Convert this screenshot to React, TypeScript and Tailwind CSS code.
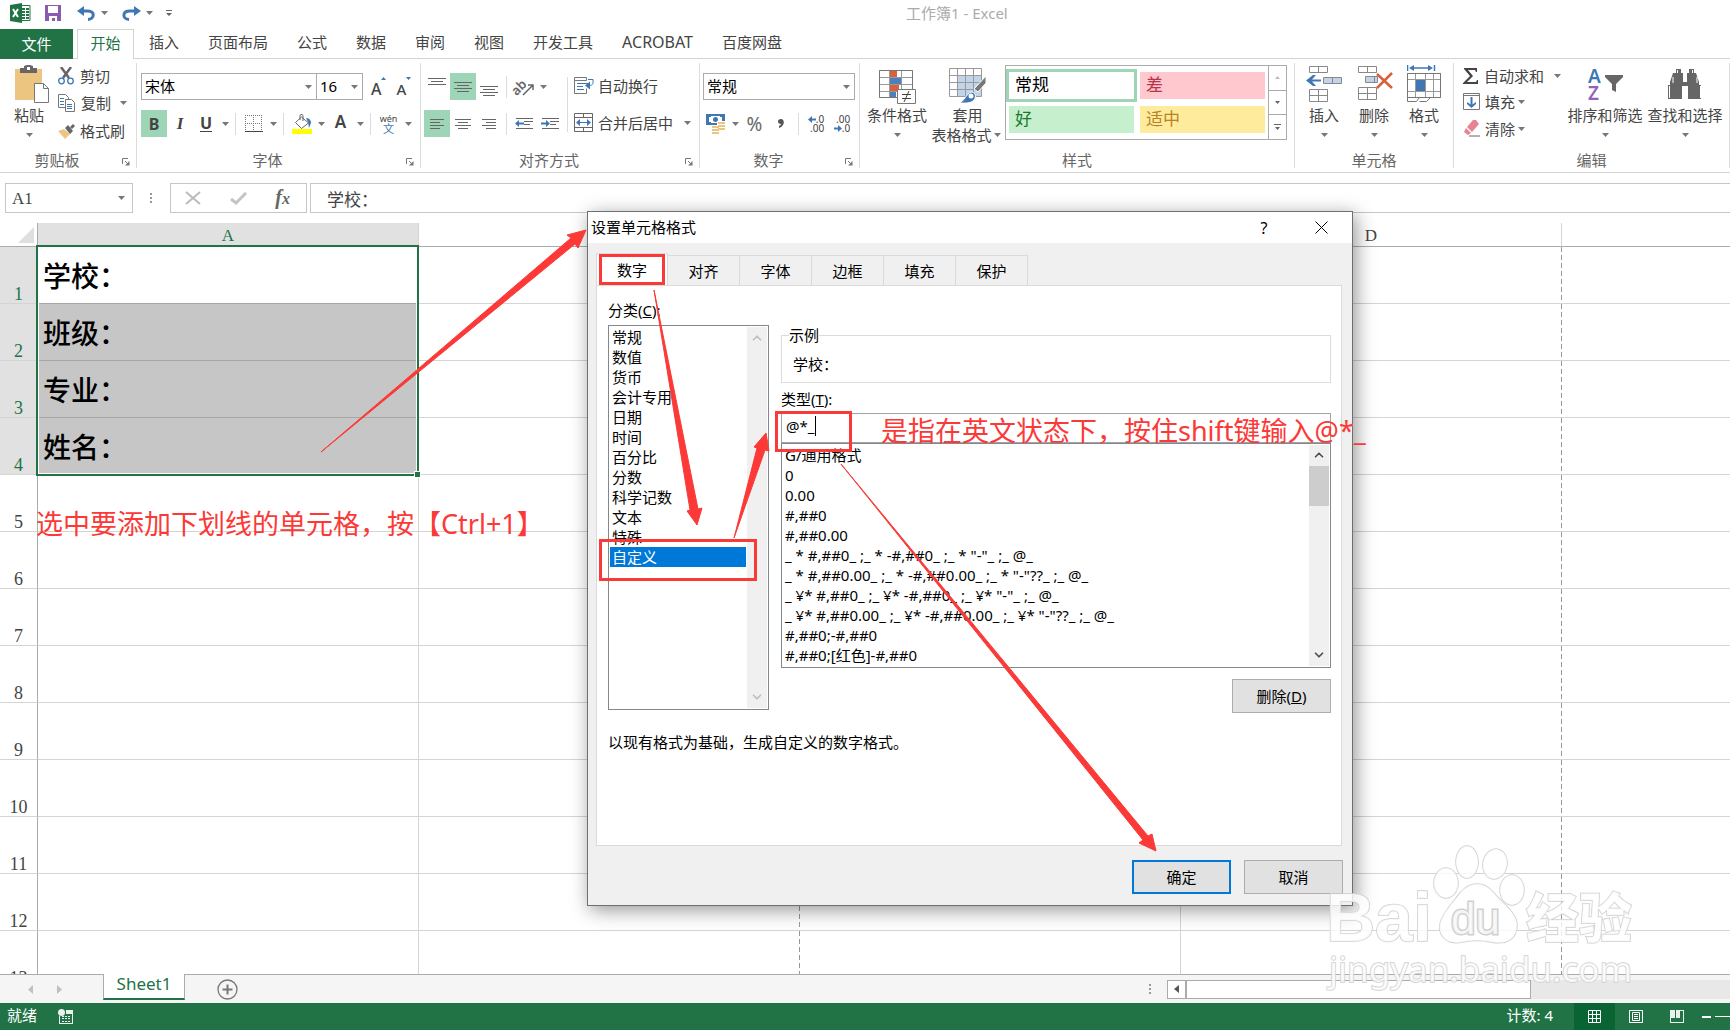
import React from 'react';
import { clsx } from 'clsx';
import { ChevronDown, ChevronUp } from 'lucide-react';

const ribbonTabs = ['插入', '页面布局', '公式', '数据', '审阅', '视图', '开发工具', 'ACROBAT', '百度网盘'];
const columns = ['A', 'B', 'C', 'D', 'E'];
const cells = ['学校：', '班级：', '专业：', '姓名：'];
const rows = Array.from({ length: 14 }, (_, i) => i + 1);
const dialogTabs = ['数字', '对齐', '字体', '边框', '填充', '保护'];
const categories = [
  '常规', '数值', '货币', '会计专用', '日期', '时间', '百分比', '分数', '科学记数', '文本', '特殊', '自定义',
];
const formats = [
  'G/通用格式',
  '0',
  '0.00',
  '#,##0',
  '#,##0.00',
  '_ * #,##0_ ;_ * -#,##0_ ;_ * "-"_ ;_ @_ ',
  '_ * #,##0.00_ ;_ * -#,##0.00_ ;_ * "-"??_ ;_ @_ ',
  '_ ¥* #,##0_ ;_ ¥* -#,##0_ ;_ ¥* "-"_ ;_ @_ ',
  '_ ¥* #,##0.00_ ;_ ¥* -#,##0.00_ ;_ ¥* "-"??_ ;_ @_ ',
  '#,##0;-#,##0',
  '#,##0;[红色]-#,##0',
];

const Caret = ({ className }: { className?: string }) => (
  <span className={clsx('flex w-3 shrink-0 justify-center', className)}>
    <svg width="7" height="4" viewBox="0 0 7 4" fill="#777">
      <path d="M0 0h7L3.5 4z" />
    </svg>
  </span>
);

const Sep = () => <span className="mx-1 h-[22px] w-px shrink-0 bg-[#dcdcdc]" />;

type ToolProps = { label: string; active?: boolean; wide?: boolean; children: React.ReactNode };

const Tool = ({ label, active, wide, children }: ToolProps) => (
  <button
    type="button"
    aria-label={label}
    className={clsx(
      'flex h-[27px] shrink-0 items-center justify-center',
      wide ? 'w-[27px]' : 'w-[26px]',
      active && 'bg-[#9fd5b7]'
    )}
  >
    {children}
  </button>
);

type GroupProps = { title: string; className: string; launcher?: boolean; children: React.ReactNode };

const Group = ({ title, className, launcher, children }: GroupProps) => (
  <section className={clsx('flex h-[105px] flex-col border-r border-[#dcdcdc]', className)}>
    <div className="flex min-h-0 flex-1">{children}</div>
    <div className="flex h-4 items-center text-[#666]">
      <span className="flex-1 text-center">{title}</span>
      {launcher && (
        <button type="button" aria-label={`${title}设置`} className="mt-1 mr-[6px] ml-2">
          <svg width="8" height="8" viewBox="0 0 8 8" fill="none" stroke="#777">
            <path d="M.5 6V.5H6M3 3l3 3" />
            <path d="M7.5 3v4.5H3z" fill="#777" stroke="none" />
          </svg>
        </button>
      )}
    </div>
  </section>
);

type BigButtonProps = { label: string; className: string; icon: React.ReactNode };

const BigButton = ({ label, className, icon }: BigButtonProps) => (
  <button type="button" className={clsx('flex shrink-0 flex-col items-center whitespace-nowrap', className)}>
    <span className="flex h-[42px] items-center">{icon}</span>
    <span className="leading-5">{label}</span>
    <Caret className="mt-2" />
  </button>
);

type ComboProps = { label: string; value: string; className: string };

const Combo = ({ label, value, className }: ComboProps) => (
  <div className={clsx('relative h-[27px] border border-[#ababab] bg-white text-black', className)}>
    <select aria-label={label} className="h-full w-full appearance-none bg-transparent pb-[2px] pl-[3px] outline-none">
      <option>{value}</option>
    </select>
    <Caret className="pointer-events-none absolute top-[11px] right-[2px]" />
  </div>
);

/* Horizontal strokes used by the alignment buttons: [x, width] per line */
const Lines = ({ lines, y = 5 }: { lines: number[][]; y?: number }) => (
  <svg width="18" height="20" viewBox="0 0 18 20" fill="#666">
    {lines.map(([x, w], i) => (
      <rect key={i} x={x} y={y + i * 3} width={w} height="1" />
    ))}
  </svg>
);

const IndentIcon = ({ out }: { out?: boolean }) => (
  <svg width="18" height="12" viewBox="0 0 18 12" fill="#666">
    <path d="M1 0h17v1H1zM9 3h9v1H9zM9 6h6v1H9zM1 10h17v1H1z" />
    <path d={out ? 'M0 5.500L4 2v2.500h5v2H4V9z' : 'M9 5.500L5 2v2.500H0v2h5V9z'} fill="#3f77b5" />
  </svg>
);

const QuickAccess = () => (
  <header className="flex h-[29px] items-center pb-[3px] pl-[10px]">
    <svg width="21" height="20" viewBox="0 0 21 20">
      <path d="M11 2.500h9v15h-9" fill="#fff" stroke="#217346" />
      <path d="M12 5h3v2h-3zM16 5h3v2h-3zM12 8h3v2h-3zM16 8h3v2h-3zM12 11h3v2h-3zM16 11h3v2h-3zM12 14h3v2h-3zM16 14h3v2h-3z" fill="#217346" />
      <path d="M0 2l12-2v20L0 18z" fill="#217346" />
      <path d="M3 6l5 8M8 6l-5 8" stroke="#fff" strokeWidth="2" />
    </svg>
    <button type="button" aria-label="保存" className="ml-[14px]">
      <svg width="16" height="16" viewBox="0 0 16 16">
        <path d="M0 0h16v16H0z" fill="#8b5bb0" />
        <path d="M3 1h10v7H3zM4 11h8v5h-2v-3H7v3H4z" fill="#fff" />
      </svg>
    </button>
    <button type="button" aria-label="撤消" className="ml-4">
      <svg width="19" height="15" viewBox="0 0 19 15" fill="none" stroke="#3f77b5" strokeWidth="3">
        <path d="M4 5h7c7 0 7 8 0 8.500" />
        <path d="M0 5L7 0v10z" fill="#3f77b5" stroke="none" />
      </svg>
    </button>
    <Caret className="ml-[2px]" />
    <button type="button" aria-label="恢复" className="ml-3">
      <svg width="19" height="15" viewBox="0 0 19 15" fill="none" stroke="#3f77b5" strokeWidth="3">
        <path d="M15 5H8C0 5 0 13 7 13.500" />
        <path d="M19 5l-7-5v10z" fill="#3f77b5" stroke="none" />
      </svg>
    </button>
    <Caret className="ml-[2px]" />
    <button type="button" aria-label="自定义快速访问工具栏" className="ml-[11px]">
      <svg width="6" height="6" viewBox="0 0 6 6" fill="#666">
        <path d="M0 0h6v1H0zM0 3h6L3 6z" />
      </svg>
    </button>
    <h1 className="ml-[734px] whitespace-nowrap text-[#ababab]">工作簿1 - Excel</h1>
  </header>
);

const RibbonTabs = () => (
  <nav className="flex h-[30px] whitespace-nowrap">
    <button type="button" className="w-[73px] bg-[#217346] text-white">文件</button>
    <span className="w-1 border-b border-[#d4d4d4]" />
    <button type="button" className="w-[57px] border border-b-0 border-[#d4d4d4] pb-1 text-[#217346]">开始</button>
    <div className="flex flex-1 gap-[29px] border-b border-[#d4d4d4] pl-[15px]">
      {ribbonTabs.map((tab) => (
        <button key={tab} type="button" className={clsx('pb-1', tab === 'ACROBAT' && 'text-base')}>{tab}</button>
      ))}
    </div>
  </nav>
);

const ClipboardGroup = () => (
  <Group title="剪贴板" className="w-[137px]" launcher>
    <BigButton
      label="粘贴"
      className="w-[58px]"
      icon={
        <svg width="34" height="38" viewBox="0 0 34 38" className="ml-[6px]">
          <path d="M0 4h27v31H0z" fill="#ecc681" />
          <path d="M5 3h4V1l3-1h3l3 1v2h4v5H5z" fill="#666" />
          <path d="M12 2h3v3h-3z" fill="#fff" />
          <path d="M19.500 18.500h9l5 5v14h-14z" fill="#fff" stroke="#777" />
          <path d="M28.500 18.500v5h5" fill="none" stroke="#777" />
        </svg>
      }
    />
    <div className="flex flex-col">
      <button type="button" className="flex h-[26px] items-center gap-[6px]">
        <svg width="16" height="18" viewBox="0 0 16 18" fill="none">
          <path d="M3 0l8 11M13 0L5 11" stroke="#666" strokeWidth="2.500" />
          <circle cx="3.500" cy="14" r="2.800" stroke="#3f77b5" strokeWidth="1.300" />
          <circle cx="12.500" cy="14" r="2.800" stroke="#3f77b5" strokeWidth="1.300" />
        </svg>
        剪切
      </button>
      <button type="button" className="flex h-7 items-center gap-[6px]">
        <svg width="17" height="18" viewBox="0 0 17 18" fill="#fff" stroke="#777">
          <path d="M.5.5h7l3 3v10H.5z" />
          <path d="M2 4.500h4M2 7.500h4M2 10.500h4" stroke="#3f77b5" />
          <path d="M7.500 5.500h6l3 3v9h-9z" />
          <path d="M9 10.500h5M9 12.500h5M9 14.500h5" stroke="#3f77b5" />
        </svg>
        复制
        <Caret />
      </button>
      <button type="button" className="flex h-7 items-center gap-[5px]">
        <svg width="17" height="15" viewBox="0 0 17 15">
          <path d="M0 7l6-2 6 5-5 5z" fill="#ecc681" />
          <path d="M7 4l3-3 5 6-3 3zM12 3l3-3 2 2-3 3z" fill="#666" />
        </svg>
        格式刷
      </button>
    </div>
  </Group>
);

const FontGroup = () => (
  <Group title="字体" className="w-[284px]" launcher>
    <div className="flex flex-col gap-[10px] pt-[10px] pl-1">
      <div className="flex items-center">
        <Combo label="字体" value="宋体" className="w-[176px]" />
        <Combo label="字号" value="16" className="ml-[-1px] w-[47px]" />
        <button type="button" aria-label="增大字号" className="ml-2 flex items-start">
          <span className="pt-1 text-base leading-4 font-medium">A</span>
          <svg width="5" height="3" viewBox="0 0 5 3" fill="#3f77b5"><path d="M0 3h5L2.500 0z" /></svg>
        </button>
        <button type="button" aria-label="减小字号" className="ml-[10px] flex items-start">
          <span className="pt-1 text-[15px] leading-4 font-medium">A</span>
          <svg width="5" height="3" viewBox="0 0 5 3" fill="#3f77b5"><path d="M0 0h5L2.500 3z" /></svg>
        </button>
      </div>
      <div className="flex items-center">
        <Tool label="加粗" active><b className="text-base">B</b></Tool>
        <Tool label="倾斜"><i className="font-['Liberation_Serif',serif] text-[17px] font-bold">I</i></Tool>
        <Tool label="下划线"><span className="border-b border-[#444] text-base leading-4 font-bold">U</span></Tool>
        <Caret />
        <Sep />
        <Tool label="边框" wide>
          <svg width="18" height="18" viewBox="0 0 18 18" fill="none" stroke="#777">
            <path d="M.5 0v17M8.500 0v17M16.500 0v17M0 .5h17M0 8.500h17" strokeDasharray="1 1" />
            <path d="M0 16.500h18" stroke="#444" />
          </svg>
        </Tool>
        <Caret />
        <Sep />
        <Tool label="填充颜色" wide>
          <svg width="20" height="20" viewBox="0 0 20 20">
            <path d="M0 15h20v5H0z" fill="#ff0" />
            <path d="M9.500 3l7 6-7 5.500-6-6zM8 6V1.500C8 0 11 0 11 2v5" fill="#fff" stroke="#666" />
            <path d="M14 4c4 0 5 3 5 5l-2 5-1-6z" fill="#3f77b5" />
          </svg>
        </Tool>
        <Caret />
        <Tool label="字体颜色" wide><span className="mb-1 text-[17px] leading-5 font-semibold">A</span></Tool>
        <Caret />
        <Sep />
        <Tool label="显示拼音字段" wide>
          <span className="flex flex-col items-center text-[9px] leading-[9px]">
            wén
            <span className="text-[11px] leading-[11px] text-[#3f77b5]">文</span>
          </span>
        </Tool>
        <Caret />
      </div>
    </div>
  </Group>
);

const AlignGroup = () => (
  <Group title="对齐方式" className="w-[279px]" launcher>
    <div className="flex flex-col gap-[10px] pt-[10px] pl-[3px]">
      <div className="flex items-center">
        <Tool label="顶端对齐"><Lines y={1} lines={[[0, 18], [3, 12], [0, 18]]} /></Tool>
        <Tool label="垂直居中" active><Lines y={5} lines={[[0, 18], [3, 12], [0, 18], [3, 12]]} /></Tool>
        <Tool label="底端对齐"><Lines y={9} lines={[[0, 18], [3, 12], [0, 18], [3, 12]]} /></Tool>
        <Sep />
        <Tool label="方向">
          <svg width="19" height="18" viewBox="0 0 19 18" fill="none" stroke="#666" strokeWidth="1.500" className="overflow-visible">
            <text x="-4" y="13" transform="rotate(-45 5 9)" fill="#666" stroke="none" fontSize="13" fontWeight="600">ab</text>
            <path d="M8 17L18 7M13 7h5v5" />
          </svg>
        </Tool>
        <Caret />
      </div>
      <div className="flex items-center">
        <Tool label="左对齐" active><Lines lines={[[2, 14], [2, 10], [2, 14], [2, 10]]} /></Tool>
        <Tool label="居中"><Lines lines={[[1, 16], [4, 10], [1, 16], [4, 10]]} /></Tool>
        <Tool label="右对齐"><Lines lines={[[2, 14], [6, 10], [2, 14], [6, 10]]} /></Tool>
        <Sep />
        <Tool label="减少缩进量"><IndentIcon out /></Tool>
        <Tool label="增加缩进量"><IndentIcon /></Tool>
      </div>
    </div>
    <span className="mx-1 mt-[14px] h-[55px] w-px bg-[#dcdcdc]" />
    <div className="flex flex-col gap-[10px] pt-[9px] pl-[2px]">
      <button type="button" className="flex h-[27px] items-center gap-1">
        <svg width="20" height="20" viewBox="0 0 20 20" fill="none" stroke="#777">
          <path d="M.5 4.500v-3h12v3zM.5 4.500v13h12v-5" />
          <path d="M3 7.500h11M3 10.500h6M3 13.500h7" stroke="#3f77b5" />
          <path d="M14 3.500h5v3c0 3-3 3-5 3" stroke="#3f77b5" />
          <path d="M11 9.500l5-4v8z" fill="#3f77b5" stroke="none" />
        </svg>
        自动换行
      </button>
      <button type="button" className="flex h-[27px] items-center gap-1">
        <svg width="20" height="20" viewBox="0 0 20 20" fill="none" stroke="#666">
          <path d="M.5.5h18v18H.5zM.5 4.500h18M.5 14.500h18M9.500.5v4M9.500 14.500v4" />
          <path d="M4 9.500h11" stroke="#3f77b5" />
          <path d="M2 9.500L6 6v7zM17 9.500L13 6v7z" fill="#3f77b5" stroke="none" />
        </svg>
        合并后居中
        <Caret className="ml-1" />
      </button>
    </div>
  </Group>
);

const NumberGroup = () => (
  <Group title="数字" className="w-[160px]" launcher>
    <div className="flex flex-col gap-[10px] pt-[10px] pl-[3px]">
      <Combo label="数字格式" value="常规" className="w-[152px]" />
      <div className="flex items-center">
        <Tool label="会计数字格式">
          <svg width="20" height="20" viewBox="0 0 20 20">
            <path d="M0 0h19v11H0z" fill="#3f77b5" />
            <path d="M3 3h2V2h9v1h2v5h-2v1H5V8H3z" fill="#fff" />
            <circle cx="9.500" cy="5.500" r="2.500" fill="#3f77b5" />
            <path d="M11 7h8v10h-5v3H6v-9h5z" fill="#fff" />
            <path d="M12 8h7v2h-7zM12 11h7v2h-7zM12 14h7v2h-7zM6 12h7v2H6zM6 15h7v2H6zM6 18h7v2H6z" fill="#ecc681" />
          </svg>
        </Tool>
        <Caret />
        <Tool label="百分比样式" wide><span className="text-[19px] text-[#666]">%</span></Tool>
        <Tool label="千位分隔样式">
          <svg width="6" height="9" viewBox="0 0 6 9" fill="#555"><path d="M3 0c4 0 4 7-2 9V7c2-1 2-2 2-2C-1 5-1 0 3 0z" /></svg>
        </Tool>
        <Sep />
        <Tool label="增加小数位数">
          <span className="flex flex-col items-end text-[10px] leading-[9px]">
            <span className="flex items-center">
              <svg width="8" height="7" viewBox="0 0 8 7" fill="#3f77b5"><path d="M0 3.500L4 0v2.500h4v2H4V7z" /></svg>.0
            </span>
            .00
          </span>
        </Tool>
        <Tool label="减少小数位数">
          <span className="flex flex-col items-end text-[10px] leading-[9px]">
            .00
            <span className="flex items-center">
              <svg width="8" height="7" viewBox="0 0 8 7" fill="#3f77b5"><path d="M8 3.500L4 0v2.500H0v2h4V7z" /></svg>.0
            </span>
          </span>
        </Tool>
      </div>
    </div>
  </Group>
);

const StylesGroup = () => (
  <Group title="样式" className="w-[435px]">
    <BigButton
      label="条件格式"
      className="ml-1 w-[66px]"
      icon={
        <svg width="37" height="36" viewBox="0 0 37 36" fill="none" stroke="#999" className="mt-1">
          <path d="M.5 2.500h33v27H.5zM10.500 2v27M22.500 2v27M0 9.500h33M0 16.500h33M0 23.500h33" />
          <path d="M.5 2.500h33v27H.5z" stroke="#777" />
          <path d="M11 3h7v6h-7zM11 17h9v6h-9z" fill="#d9603b" stroke="none" />
          <path d="M11 10h11v6H11zM11 24h6v5h-6z" fill="#4a80bd" stroke="none" />
          <path d="M18.500 21.500h18v14h-18z" fill="#fff" stroke="#777" />
          <path d="M23 26.500h9M23 30.500h9M30 23l-5 11" stroke="#444" />
        </svg>
      }
    />
    <button type="button" className="flex w-[75px] shrink-0 flex-col items-center leading-5 whitespace-nowrap">
      <span className="flex h-[42px] items-center">
        <svg width="38" height="36" viewBox="0 0 38 36" fill="none" stroke="#999" className="mt-1">
          <path d="M9 8h23v20H9z" fill="#c2d4ea" stroke="none" />
          <path d="M.5.5h32v28H.5zM8.500 0v28M16.500 0v28M24.500 0v28M0 7.500h32M0 14.500h32M0 21.500h32" />
          <path d="M37 8v7l-8 9-4-3z" fill="#777" stroke="#fff" />
          <path d="M10 35c5-1 7-9 12-11 4 0 6 4 3 8-3 4-11 3-15 3z" fill="#3f77b5" stroke="#fff" />
          <circle cx="22" cy="28" r="2.500" fill="#fff" stroke="none" />
        </svg>
      </span>
      <span>套用</span>
      <span className="flex items-center">表格格式<Caret /></span>
    </button>
    <div className="mt-[2px] flex h-[75px] w-[282px] border border-[#ababab]">
      <div className="grid flex-1 grid-cols-2 gap-[6px] px-[3px] py-[6px] text-[17px] leading-[25px]">
        <button type="button" className="h-[27px] bg-white pb-[2px] pl-[6px] text-left text-black outline-3 outline-[#9fd5b7]">常规</button>
        <button type="button" className="h-[27px] bg-[#ffc7ce] pb-[2px] pl-[6px] text-left text-[#b5354a]">差</button>
        <button type="button" className="h-[27px] bg-[#c6efce] pb-[2px] pl-[6px] text-left text-[#1c7a2e]">好</button>
        <button type="button" className="h-[27px] bg-[#ffeb9c] pb-[2px] pl-[6px] text-left text-[#b5832a]">适中</button>
      </div>
      <div className="flex w-[18px] flex-col divide-y divide-[#ababab] border-l border-[#ababab]">
        <button type="button" aria-label="上一行" className="flex flex-1 items-center justify-center">
          <svg width="5" height="3" viewBox="0 0 5 3" fill="#bbb"><path d="M0 3h5L2.500 0z" /></svg>
        </button>
        <button type="button" aria-label="下一行" className="flex flex-1 items-center justify-center">
          <svg width="5" height="3" viewBox="0 0 5 3" fill="#666"><path d="M0 0h5L2.500 3z" /></svg>
        </button>
        <button type="button" aria-label="其他" className="flex flex-1 items-center justify-center">
          <svg width="7" height="7" viewBox="0 0 7 7" fill="#666"><path d="M0 0h7v1H0zM1 3h5L3.500 6z" /></svg>
        </button>
      </div>
    </div>
  </Group>
);

const CellsGroup = () => (
  <Group title="单元格" className="w-[159px]">
    <BigButton
      label="插入"
      className="ml-1 w-[50px]"
      icon={
        <svg width="36" height="36" viewBox="0 0 36 36" fill="#fff" stroke="#888">
          <path d="M3.500.5h18v6h-18zM12.500.5v6M3.500 23.500h18v12h-18zM12.500 23.500v12M3.500 29.500h18" />
          <path d="M17.500 11.500h18v6h-18zM26.500 11.500v6" fill="#c2d4ea" />
          <path d="M0 14.500L7 9h3l-4 4.500h9v2H6l4 4.500H7z" fill="#3f77b5" stroke="none" />
        </svg>
      }
    />
    <BigButton
      label="删除"
      className="w-[50px]"
      icon={
        <svg width="36" height="36" viewBox="0 0 36 36" fill="#fff" stroke="#888" className="ml-[3px]">
          <path d="M.5.5h18v6H.5zM9.500.5v6M.5 21.500h18v12H.5zM9.500 21.500v12M.5 27.500h18" />
          <path d="M7.500 10.500h12v6h-12zM16.500 10.500v6" fill="#c2d4ea" />
          <path d="M19 8l15 14M34 7L19 22" fill="none" stroke="#d9603b" strokeWidth="2.500" />
        </svg>
      }
    />
    <BigButton
      label="格式"
      className="w-[50px]"
      icon={
        <svg width="35" height="38" viewBox="0 0 35 38" fill="none" stroke="#999">
          <path d="M.5 0v6M27.500 0v6M4 3h20" stroke="#3f77b5" strokeWidth="1.500" />
          <path d="M2 3l5-3v6zM26 3l-5-3v6z" fill="#3f77b5" stroke="none" />
          <path d="M.5 8.500h33v24H.5zM8.500 8v24M18.500 8v24M26.500 8v24M0 14.500h33M0 26.500h33" />
          <path d="M.5 8.500h33v24H.5zM.5 32.500v4h9l3-4M12.500 36.500h7l4-4" stroke="#777" />
          <path d="M9 15h9v11H9z" fill="#3f77b5" stroke="none" />
        </svg>
      }
    />
  </Group>
);

const EditGroup = () => (
  <Group title="编辑" className="min-w-[276px] flex-1">
    <div className="flex w-[111px] shrink-0 flex-col pl-[9px] whitespace-nowrap">
      <button type="button" className="flex h-[25px] items-center gap-[5px]">
        <svg width="16" height="16" viewBox="0 0 16 16" fill="#444">
          <path d="M1 0h13v4h-1l-1-2H5l5 6-6 6h9l1-2h1v4H0v-1l7-7-6-7z" />
        </svg>
        自动求和
        <Caret className="ml-[2px]" />
      </button>
      <button type="button" className="flex h-[27px] items-center gap-[5px]">
        <svg width="17" height="17" viewBox="0 0 17 17" fill="none" stroke="#777">
          <path d="M.5.5h16v16H.5zM0 2.500h17" />
          <path d="M8.500 4v8" stroke="#3f77b5" strokeWidth="2" />
          <path d="M4 9l4.500 3L13 9v2l-4.500 4L4 11z" fill="#3f77b5" stroke="none" />
        </svg>
        填充
        <Caret className="ml-[-5px]" />
      </button>
      <button type="button" className="flex h-[27px] items-center gap-[5px]">
        <svg width="17" height="17" viewBox="0 0 17 17">
          <path d="M4 7l6-7h3l3 4-7 8z" fill="#e88397" />
          <path d="M3 8l5 5-3 2-4-3z" fill="#e88397" />
          <path d="M6 16h12" stroke="#666" />
        </svg>
        清除
        <Caret className="ml-[-5px]" />
      </button>
    </div>
    <BigButton
      label="排序和筛选"
      className="w-[80px]"
      icon={
        <svg width="35" height="34" viewBox="0 0 35 34" fontSize="19" fontWeight="600" className="overflow-visible">
          <text x="0" y="16" fill="#3f77b5">A</text>
          <text x="0" y="33" fill="#9463b8">Z</text>
          <path d="M17 8h18v2l-7 7v8l-4-2v-6l-7-7z" fill="#666" />
        </svg>
      }
    />
    <BigButton
      label="查找和选择"
      className="w-[80px]"
      icon={
        <svg width="34" height="30" viewBox="0 0 34 30" fill="#666">
          <path d="M8 0h5v4h2v9h4V4h2V0h5v4h2l3 9v3h2v14H20V17h-6v13H0V16h2v-3l3-9h3z" />
          <path d="M9.500 1v3M24.500 1v3M1.500 17v12M32.500 17v12M5 8v6M29 8v6" stroke="#fff" />
        </svg>
      }
    />
  </Group>
);

const FormulaBar = () => (
  <div className="flex h-[50px] shrink-0 items-start pt-[10px] font-['Liberation_Serif','Noto_Sans_CJK_SC',serif] text-[17px]">
    <div className="relative ml-[5px] h-[30px] w-[128px] border border-[#c6c6c6]">
      <input aria-label="名称框" defaultValue="A1" className="h-full w-full pt-[2px] pl-[6px] outline-none" />
      <Caret className="absolute top-[12px] right-[5px]" />
    </div>
    <svg width="3" height="11" viewBox="0 0 3 11" fill="#999" className="mx-[17px] mt-[10px]">
      <path d="M0 0h2v2H0zM0 4h2v2H0zM0 8h2v2H0z" />
    </svg>
    <div className="flex h-[30px] w-[137px] items-center justify-between border border-[#c6c6c6] pr-4 pl-[14px]">
      <button type="button" aria-label="取消输入">
        <svg width="16" height="14" viewBox="0 0 16 14" stroke="#bbb" strokeWidth="2"><path d="M1 1l14 12M15 1L1 13" /></svg>
      </button>
      <button type="button" aria-label="输入">
        <svg width="17" height="13" viewBox="0 0 17 13" fill="none" stroke="#c4c4c4" strokeWidth="3"><path d="M1 7l5 4L16 1" /></svg>
      </button>
      <button type="button" className="text-[20px] leading-6 font-bold text-[#666] italic">
        f<span className="text-base">x</span>
      </button>
    </div>
    <input
      aria-label="编辑栏"
      defaultValue="学校："
      className="ml-[3px] h-[30px] min-w-0 flex-1 border border-r-0 border-[#c6c6c6] pl-4 outline-none"
    />
  </div>
);

const Sheet = () => (
  <main className="relative min-h-0 flex-1 overflow-hidden font-['Liberation_Serif','Noto_Sans_CJK_SC',serif]">
    <table className="w-[1943px] table-fixed border-separate border-spacing-0">
      <colgroup>
        <col className="w-[38px]" />
        {columns.map((name) => (
          <col key={name} className="w-[381px]" />
        ))}
      </colgroup>
      <thead>
        <tr className="h-6 text-[17px] leading-5">
          <th className="border-r border-b border-[#ababab] p-0">
            <svg width="16" height="16" viewBox="0 0 16 16" className="ml-[18px]" fill="#dfdfdf"><path d="M16 0v16H0z" /></svg>
          </th>
          {columns.map((name) => (
            <th
              key={name}
              className={clsx(
                'border-r border-b border-r-[#d4d4d4] border-b-[#ababab] p-0 pt-[3px] font-normal',
                name === 'A' && 'bg-[#e1e1e1] text-[#217346]'
              )}
            >
              {name}
            </th>
          ))}
        </tr>
      </thead>
      <tbody>
        {rows.map((row) => (
          <tr key={row} className="h-[57px]">
            <th
              className={clsx(
                'border-r border-b border-r-[#ababab] border-b-[#d4d4d4] p-0 align-bottom text-[18px] leading-[18px] font-normal',
                row <= 4 && 'bg-[#e1e1e1] text-[#217346]'
              )}
            >
              {row}
            </th>
            {columns.map((name) => (
              <td
                key={name}
                className={clsx(
                  'border-b p-0 pt-[6px] text-[28px] leading-8 font-medium text-black',
                  name === 'B' || name === 'D'
                    ? 'bg-[linear-gradient(#999_62%,transparent_62%)] bg-[length:1px_8px] bg-right bg-repeat-y'
                    : 'border-r border-r-[#d4d4d4]',
                  name === 'A' && row <= 4 ? 'border-b-[#a6a6a6] pl-[5px]' : 'border-b-[#d4d4d4]',
                  name === 'A' && row > 1 && row <= 4 && 'bg-[#c6c6c6]'
                )}
              >
                {name === 'A' && cells[row - 1]}
              </td>
            ))}
          </tr>
        ))}
      </tbody>
    </table>
    {/* selection frame with its fill handle */}
    <div className="absolute top-[22px] left-[36px] h-[231px] w-[383px] border-2 border-[#217346] shadow-[inset_0_0_0_1px_#fff]">
      <span className="absolute right-[-4px] bottom-[-4px] h-[7px] w-[7px] border border-white bg-[#217346]" />
    </div>
  </main>
);

const SheetBar = () => (
  <div className="flex h-[29px] shrink-0 items-start bg-[#f5f5f5]">
    <div className="flex h-full w-[103px] items-center gap-6 border-t border-[#ababab] pl-7">
      <button type="button" aria-label="上一张">
        <svg width="5" height="9" viewBox="0 0 5 9" fill="#c0c0c0"><path d="M5 0v9L0 4.500z" /></svg>
      </button>
      <button type="button" aria-label="下一张">
        <svg width="5" height="9" viewBox="0 0 5 9" fill="#c0c0c0"><path d="M0 0v9l5-4.500z" /></svg>
      </button>
    </div>
    <button type="button" className="h-[26px] w-[82px] border-x border-b-2 border-x-[#ababab] border-b-[#217346] bg-white pb-1 text-[17px] leading-5 text-[#217346]">
      Sheet1
    </button>
    <div className="flex h-full flex-1 items-center border-t border-[#ababab]">
      <button type="button" aria-label="新工作表" className="ml-8">
        <svg width="21" height="21" viewBox="0 0 21 21" fill="none" stroke="#777">
          <circle cx="10.500" cy="10.500" r="9.500" strokeWidth="1.300" />
          <path d="M10.500 5.500v10M5.500 10.500h10" strokeWidth="2" />
        </svg>
      </button>
      <div className="ml-auto flex h-[19px] w-[581px] items-center">
        <svg width="3" height="10" viewBox="0 0 3 10" fill="#999">
          <path d="M0 0h2v2H0zM0 4h2v2H0zM0 8h2v2H0z" />
        </svg>
        <button type="button" aria-label="向左滚动" className="ml-[15px] flex h-full w-[19px] items-center justify-center border border-[#ababab] bg-white">
          <svg width="5" height="8" viewBox="0 0 5 8" fill="#555"><path d="M5 0v8L0 4z" /></svg>
        </button>
        <div className="h-full flex-1 bg-[#e8e8e8]">
          <div className="h-full w-[345px] border border-[#ababab] bg-white" />
        </div>
      </div>
    </div>
  </div>
);

const StatusBar = () => (
  <footer className="flex h-[27px] shrink-0 items-center bg-[#217346] text-white">
    <span className="ml-[7px] pb-[3px]">就绪</span>
    <svg width="16" height="15" viewBox="0 0 16 15" className="ml-[21px]" fill="#e8f1ec">
      <circle cx="3.500" cy="3.500" r="3.500" />
      <path d="M8 1h7v4H8zM1 7h1v7h12V5h1v10H1zM4 7h2v1H4zM7 7h2v1H7zM10 7h2v1h-2zM4 9h2v1H4zM7 9h2v1H7zM10 9h2v1h-2zM4 12h2v1H4zM7 12h2v1H7zM10 12h2v1h-2z" />
    </svg>
    <span className="mr-[21px] ml-auto pb-[3px]">计数: 4</span>
    <button type="button" aria-label="普通" className="flex h-full w-[41px] items-center justify-center bg-[#0a6332]">
      <svg width="13" height="13" viewBox="0 0 13 13" fill="none" stroke="#fff"><path d="M.5.5h12v12H.5zM4.500 0v13M8.500 0v13M0 4.500h13M0 8.500h13" /></svg>
    </button>
    <button type="button" aria-label="页面布局" className="flex h-full w-[41px] items-center justify-center">
      <svg width="14" height="13" viewBox="0 0 14 13" fill="none" stroke="#fff"><path d="M.5.5h13v12H.5zM3.500 2.500h7v8h-7zM5 4.500h4M5 6.500h4M5 8.500h4" /></svg>
    </button>
    <button type="button" aria-label="分页预览" className="flex h-full w-[41px] items-center justify-center">
      <svg width="14" height="13" viewBox="0 0 14 13" fill="#e8f1ec"><path d="M0 0h1v12h12V0h1v13H0zM1 0h4v8H1zM6 0h4v8H6zM10 0h4v1h-4z" /></svg>
    </button>
    <button type="button" aria-label="缩小" className="ml-[5px] h-[2px] w-[9px] bg-white" />
    <span className="ml-1 h-px w-[15px] bg-white" />
  </footer>
);

const FormatDialog = () => (
  <div
    role="dialog"
    aria-labelledby="dialog-title"
    className="absolute top-[211px] left-[587px] flex w-[766px] flex-col border border-[#6f6f6f] bg-[#f0f0f0] text-black shadow-[3px_4px_18px_rgba(0,0,0,0.42)]"
  >
    <div className="flex h-[31px] items-center bg-white pl-[3px]">
      <h2 id="dialog-title" className="pb-[2px]">设置单元格格式</h2>
      <button type="button" aria-label="帮助" className="ml-auto w-6 text-base">?</button>
      <button type="button" aria-label="关闭" className="mr-6 ml-[39px]">
        <svg width="13" height="13" viewBox="0 0 13 13" stroke="#000"><path d="M.5.5l12 12M12.500.5l-12 12" /></svg>
      </button>
    </div>
    <div role="tablist" className="mt-[10px] ml-2 flex items-end">
      {dialogTabs.map((tab, i) => (
        <button
          key={tab}
          type="button"
          role="tab"
          aria-selected={i === 0}
          className={clsx(
            'border border-b-0 border-[#dadada]',
            i === 0 ? 'h-8 w-[72px] bg-white' : 'h-[30px] w-[72px] border-l-0'
          )}
        >
          {tab}
        </button>
      ))}
    </div>
    <div className="mr-[10px] ml-2 border border-[#dadada] bg-white pt-[14px] pr-[10px] pl-[11px]">
      <div className="flex items-start gap-3">
        <div className="w-[161px]">
          <div id="category-label" className="mb-[5px] leading-5">分类(<u>C</u>):</div>
          <div className="flex h-[385px] border border-[#828790] p-[1px]">
            <ul role="listbox" aria-labelledby="category-label" className="flex-1 leading-5">
              {categories.map((name) => (
                <li
                  key={name}
                  role="option"
                  aria-selected={name === '自定义'}
                  className={clsx('h-5 pl-[2px]', name === '自定义' && 'bg-[#0078d7] text-white')}
                >
                  {name}
                </li>
              ))}
            </ul>
            <div className="ml-[1px] flex w-5 flex-col items-center justify-between bg-[#f0f0f0] py-1 text-[#bfbfbf]">
              <ChevronUp size={14} strokeWidth={3} />
              <ChevronDown size={14} strokeWidth={3} />
            </div>
          </div>
        </div>
        <div className="min-w-0 flex-1 pt-6">
          <fieldset className="h-[59px] border border-[#dcdcdc] pl-[11px]">
            <legend className="ml-[-4px] leading-[22px]">示例</legend>
            <div className="pt-2 leading-5">学校：</div>
          </fieldset>
          <label htmlFor="format-type" className="mt-[6px] mb-1 block leading-5">类型(<u>T</u>):</label>
          <div className="relative flex h-[30px]">
            <input id="format-type" defaultValue="@*_" className="min-w-0 flex-1 border border-[#a0a3aa] pb-1 pl-1 outline-none" />
            <span className="absolute top-[3px] left-[34px] h-5 w-px bg-black" />
          </div>
          <div className="flex h-[225px] border border-[#828790] p-[1px]">
            <ul role="listbox" aria-label="数字格式类型" className="min-w-0 flex-1 leading-5 whitespace-pre">
              {formats.map((format) => (
                <li key={format} role="option" aria-selected={false} className="h-5 pl-[2px]">{format}</li>
              ))}
            </ul>
            <div className="flex w-5 flex-col items-center bg-[#f0f0f0] text-[#505050]">
              <ChevronUp size={14} strokeWidth={3} className="mt-[3px] mb-1" />
              <div className="h-[40px] w-5 bg-[#cdcdcd]" />
              <ChevronDown size={14} strokeWidth={3} className="mt-auto mb-1" />
            </div>
          </div>
          <button type="button" className="mt-[11px] ml-auto block h-[34px] w-[99px] border border-[#adadad] bg-[#e1e1e1]">
            删除(<u>D</u>)
          </button>
        </div>
      </div>
      <p className="mt-[19px] h-[113px] leading-5">以现有格式为基础，生成自定义的数字格式。</p>
    </div>
    <div className="flex justify-end gap-[13px] pt-[14px] pr-[9px] pb-[11px]">
      <button type="button" className="h-[34px] w-[99px] border-2 border-[#0078d7] bg-[#e1e1e1]">确定</button>
      <button type="button" className="h-[34px] w-[99px] border border-[#adadad] bg-[#e1e1e1]">取消</button>
    </div>
  </div>
);

const Annotations = () => (
  <div className="pointer-events-none absolute inset-0 text-[27px] leading-8 whitespace-nowrap text-[#fb3a38]">
    <svg className="absolute inset-0 h-full w-full" fill="#fb3a38">
      <g stroke="#fb3a38">
        <path d="M321 452L571 238l-4-3 19-5-8 18-3-4z" />
        <path d="M654 290l44 219 4-1-5 17-10-14 3-1z" />
        <path d="M734 538l23-90-3-1 12-14 3 18-4-1z" />
        <path d="M841 464l307 372 4-2 4 17-17-8 4-3z" />
      </g>
      <g fill="none" stroke="#fb3a38" strokeWidth="3">
        <path d="M600.500 255.500h63v28h-63zM600.500 540.500h155v39h-155zM776.500 412.500h74v38h-74z" />
      </g>
    </svg>
    <p className="absolute top-[508px] left-[36px]">选中要添加下划线的单元格，按【Ctrl+1】</p>
    <p className="absolute top-[415px] left-[881px]">是指在英文状态下，按住shift键输入@*_</p>
  </div>
);

const Watermark = () => (
  <svg
    className="pointer-events-none absolute top-[840px] left-[1320px]"
    width="325"
    height="155"
    viewBox="0 0 325 155"
    fill="#fff"
    fillOpacity="0.8"
    stroke="#d0d0d0"
    strokeWidth="1.500"
    paintOrder="stroke"
  >
    <text x="6" y="101" fontFamily="Liberation Sans" fontSize="68" fontWeight="700">Bai</text>
    <ellipse cx="126" cy="43" rx="12" ry="15" />
    <ellipse cx="147" cy="22" rx="11" ry="16" />
    <ellipse cx="175" cy="24" rx="12" ry="15" transform="rotate(10 175 24)" />
    <ellipse cx="192" cy="50" rx="12" ry="15" />
    <path d="M140 53c10-12 24-12 34 0 8 10 23 20 23 32 0 15-12 20-26 17-10-2-18-2-28 0-14 3-25-4-23-18 2-11 13-21 20-31z" />
    <text x="131" y="94" fontFamily="Liberation Sans" fontSize="44" strokeWidth="3">du</text>
    <text x="206" y="98" fontFamily="Noto Sans CJK SC" fontSize="53" fontWeight="900">经验</text>
    <text x="9" y="142" fontFamily="Noto Sans" fontSize="35">jingyan.baidu.com</text>
  </svg>
);

const App = () => {
  return (
    <div
      lang="zh-CN"
      className="relative flex h-screen flex-col overflow-hidden bg-white font-['Noto_Sans','Noto_Sans_CJK_SC',sans-serif] text-[15px] leading-5 text-[#444]"
    >
      <QuickAccess />
      <RibbonTabs />
      <div className="flex h-[114px] shrink-0 border-b border-[#d4d4d4] pt-1">
        <ClipboardGroup />
        <FontGroup />
        <AlignGroup />
        <NumberGroup />
        <StylesGroup />
        <CellsGroup />
        <EditGroup />
      </div>
      <FormulaBar />
      <Sheet />
      <SheetBar />
      <StatusBar />
      <FormatDialog />
      <Annotations />
      <Watermark />
    </div>
  );
};

export default App;
